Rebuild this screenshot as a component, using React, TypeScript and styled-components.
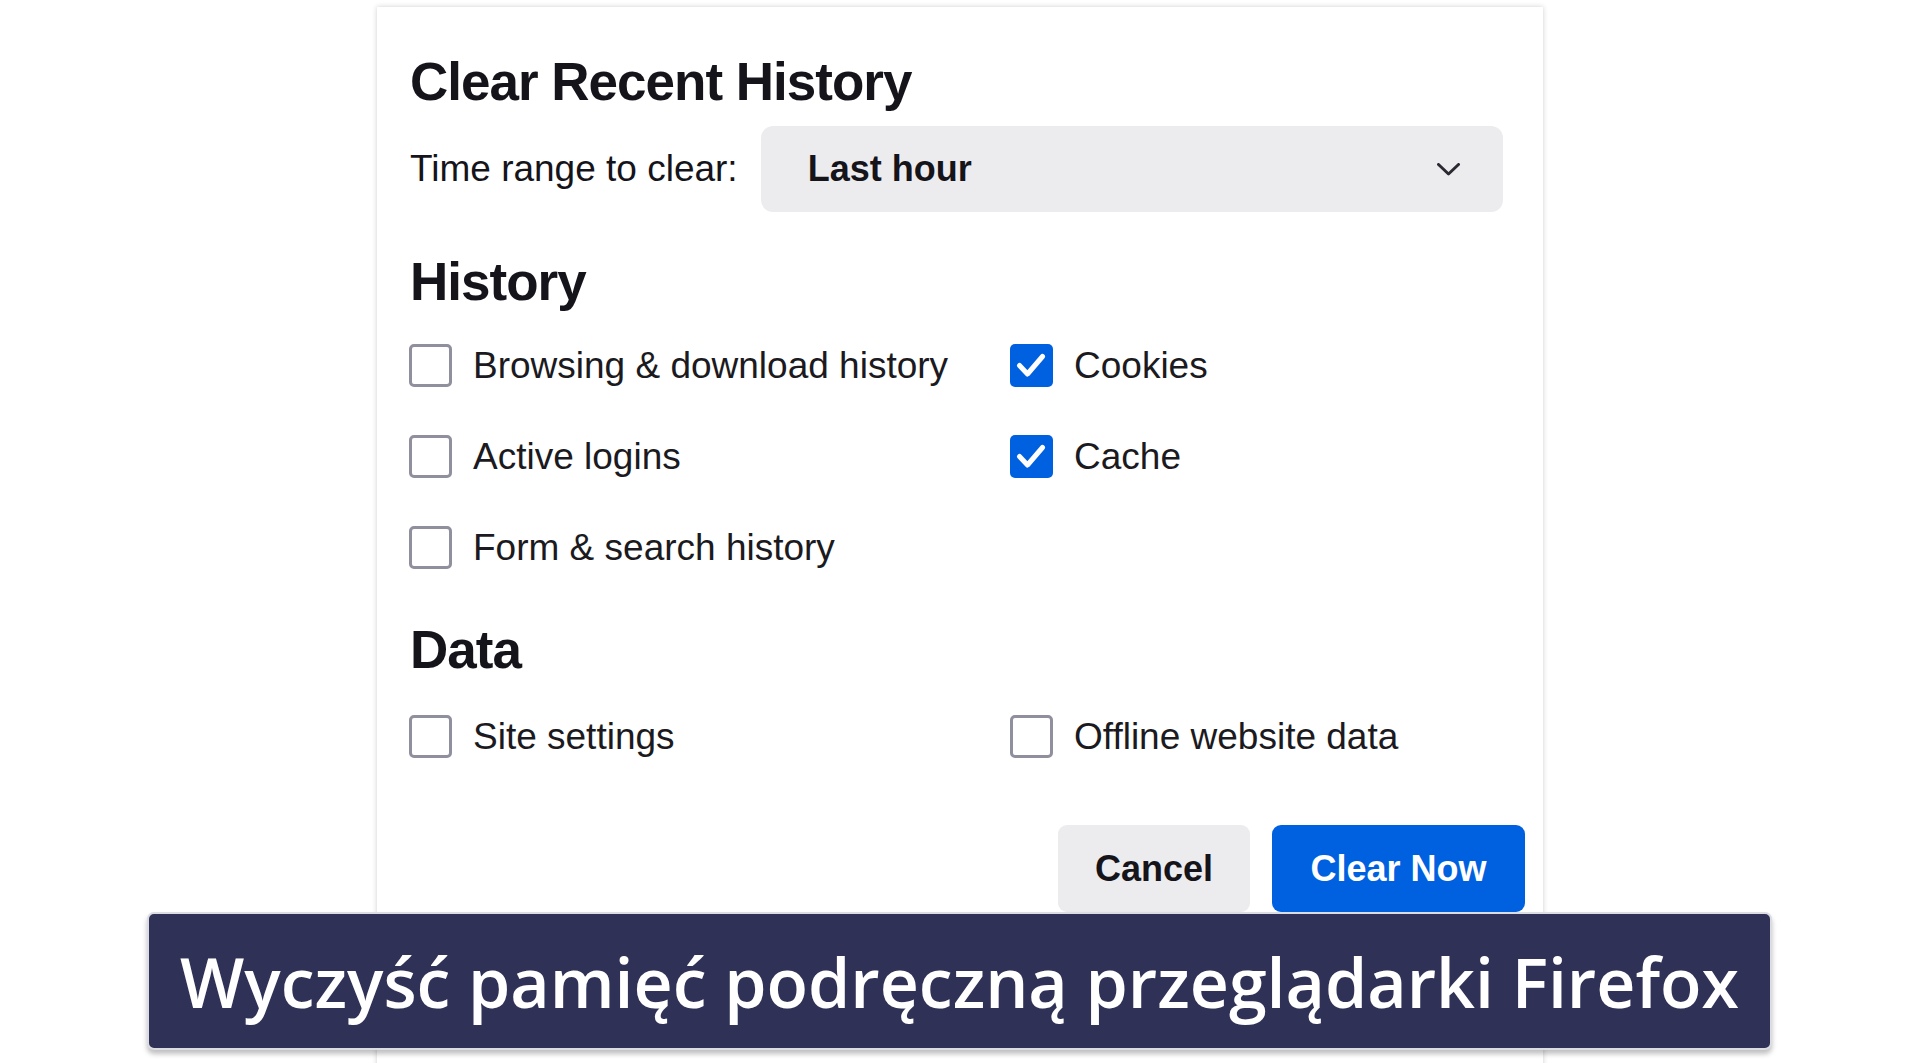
import React from 'react';
import styled, {createGlobalStyle} from 'styled-components';

const GlobalStyle = createGlobalStyle`
  html, body {
    margin: 0;
    padding: 0;
    background: #ffffff;
  }
  body {
    font-family: "Liberation Sans", Arial, sans-serif;
    color: #15141a;
  }
`;

const Page = styled.div`
  position: relative;
  width: 1919px;
  height: 1063px;
  overflow: hidden;
  background: #ffffff;
`;

const Dialog = styled.section`
  display: flex;
  flex-direction: column;
  margin: 7px 0 0 377px;
  width: 1166px;
  height: 1100px;
  box-sizing: border-box;
  padding: 48px 18px 0 33px;
  background: #ffffff;
  box-shadow: 0 0 5px rgba(40, 40, 60, 0.22);
`;

const Heading = styled.h1<{ $gap: number }>`
  margin: ${p => p.$gap}px 0 0 0;
  font-size: 53px;
  line-height: 53px;
  font-weight: 700;
  letter-spacing: -1px;
  color: #15141a;
`;

const TimeRow = styled.div`
  display: flex;
  align-items: center;
  gap: 23px;
  margin: 18px 22px 0 0;
`;

const TimeLabel = styled.span`
  font-size: 37px;
  white-space: nowrap;
`;

const Select = styled.div`
  flex: 1;
  height: 86px;
  display: flex;
  align-items: center;
  justify-content: space-between;
  padding: 0 43px 0 47px;
  border-radius: 12px;
  background: #ececef;
  font-size: 36px;
  font-weight: 700;
`;

const OptionGrid = styled.div<{ $gap: number }>`
  display: grid;
  grid-template-columns: 601px 1fr;
  row-gap: 48px;
  margin-top: ${p => p.$gap}px;
`;

const Option = styled.label`
  display: flex;
  align-items: center;
  gap: 21px;
  height: 43px;
  font-size: 37px;
  color: #1b1a21;
  white-space: nowrap;
`;

const Box = styled.span<{ $checked?: boolean }>`
  flex: none;
  width: 43px;
  height: 43px;
  box-sizing: border-box;
  margin-left: -1px;
  border-radius: 5px;
  border: ${p => p.$checked ? 'none' : '3px solid #8f8f9d'};
  background: ${p => p.$checked ? '#0061e0' : '#ffffff'};
  display: flex;
  align-items: center;
  justify-content: center;
`;

const Footer = styled.div`
  display: flex;
  justify-content: flex-end;
  gap: 22px;
  margin-top: 67px;
`;

const Button = styled.button<{ $primary?: boolean }>`
  height: 87px;
  padding: 0 36px;
  min-width: ${p => p.$primary ? 253 : 192}px;
  border: none;
  border-radius: 9px;
  font-family: "Liberation Sans", Arial, sans-serif;
  font-size: 36px;
  font-weight: 700;
  background: ${p => p.$primary ? '#0061e0' : '#ececef'};
  color: ${p => p.$primary ? '#ffffff' : '#15141a'};
`;

const Banner = styled.div`
  position: absolute;
  left: 147px;
  top: 912px;
  width: 1625px;
  height: 138px;
  box-sizing: border-box;
  display: flex;
  align-items: center;
  justify-content: center;
  border-radius: 7px;
  border: 2px solid #dcdce3;
  background: #2f3156;
  box-shadow: 0 4px 5px rgba(0, 0, 0, 0.25);
  color: #ffffff;
  font-family: "Open Sans", Lato, sans-serif;
  font-weight: 600;
  font-size: 68px;
  white-space: nowrap;
`;

const Check = () => (
  <svg width="43" height="43" viewBox="0 0 43 43">
    <polyline points="9.5,21.5 17.5,30 32.5,12.5" fill="none" stroke="#ffffff" strokeWidth="5"
              strokeLinecap="round" strokeLinejoin="round"/>
  </svg>
);

const Chevron = () => (
  <svg width="23" height="13" viewBox="0 0 23 13">
    <polyline points="1.5,1.5 11.5,11 21.5,1.5" fill="none" stroke="#2b2a33" strokeWidth="3"
              strokeLinecap="round" strokeLinejoin="round"/>
  </svg>
);

type Item = { label: string, checked?: boolean } | null;

const historyItems: Item[] = [
  {label: 'Browsing & download history'}, {label: 'Cookies', checked: true},
  {label: 'Active logins'}, {label: 'Cache', checked: true},
  {label: 'Form & search history'}, null,
];

const dataItems: Item[] = [
  {label: 'Site settings'}, {label: 'Offline website data'},
];

const Options = ({items, gap}: { items: Item[], gap: number }) => (
  <OptionGrid $gap={gap}>
    {items.map((item, i) => item ? (
      <Option key={i}>
        <Box $checked={item.checked}>{item.checked && <Check/>}</Box>
        {item.label}
      </Option>
    ) : <span key={i}/>)}
  </OptionGrid>
);

export default function App() {
  return (
    <Page>
      <GlobalStyle/>
      <Dialog>
        <Heading $gap={0}>Clear Recent History</Heading>
        <TimeRow>
          <TimeLabel>Time range to clear:</TimeLabel>
          <Select>
            <span>Last hour</span>
            <Chevron/>
          </Select>
        </TimeRow>
        <Heading $gap={43}>History</Heading>
        <Options items={historyItems} gap={36}/>
        <Heading $gap={54}>Data</Heading>
        <Options items={dataItems} gap={39}/>
        <Footer>
          <Button>Cancel</Button>
          <Button $primary>Clear Now</Button>
        </Footer>
      </Dialog>
      <Banner>Wyczyść pamięć podręczną przeglądarki Firefox</Banner>
    </Page>
  );
}
